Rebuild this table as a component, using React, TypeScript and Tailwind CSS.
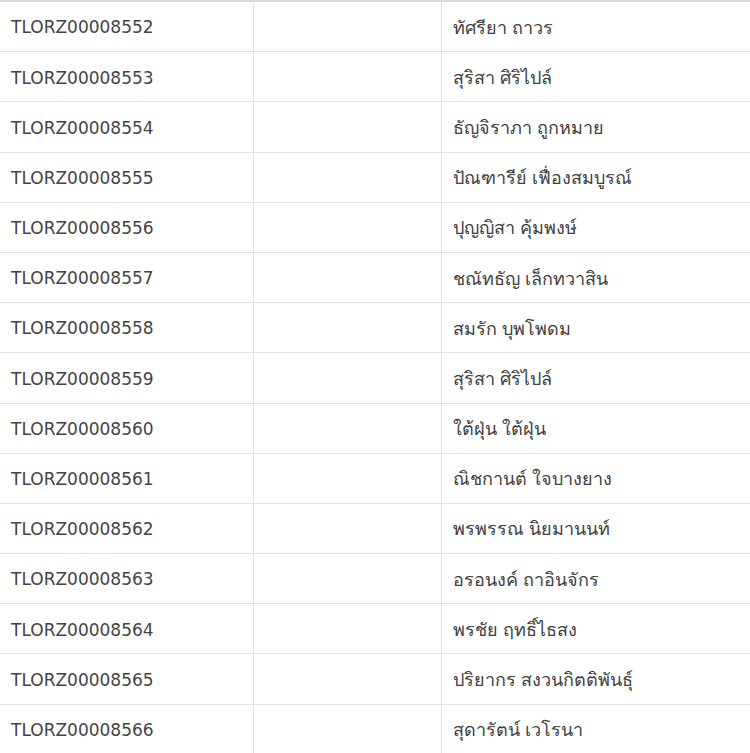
import React from "react";

const rows: [string, string][] = [
  ["TLORZ00008552", "ทัศรียา ถาวร"],
  ["TLORZ00008553", "สุริสา ศิริไปล์"],
  ["TLORZ00008554", "ธัญจิราภา ถูกหมาย"],
  ["TLORZ00008555", "ปัณฑารีย์ เฟื่องสมบูรณ์"],
  ["TLORZ00008556", "ปุญญิสา คุ้มพงษ์"],
  ["TLORZ00008557", "ชณัทธัญ เล็กทวาสิน"],
  ["TLORZ00008558", "สมรัก บุพโพดม"],
  ["TLORZ00008559", "สุริสา ศิริไปล์"],
  ["TLORZ00008560", "ใต้ฝุ่น ใต้ฝุ่น"],
  ["TLORZ00008561", "ณิชกานต์ ใจบางยาง"],
  ["TLORZ00008562", "พรพรรณ นิยมานนท์"],
  ["TLORZ00008563", "อรอนงค์ ถาอินจักร"],
  ["TLORZ00008564", "พรชัย ฤทธิ์ไธสง"],
  ["TLORZ00008565", "ปริยากร สงวนกิตติพันธุ์"],
  ["TLORZ00008566", "สุดารัตน์ เวโรนา"],
];

export default function App() {
  return (
    <div className="w-[750px] h-[753px] overflow-hidden bg-white">
      <div className="border-t-[2.3px] border-[#dcdcdc]">
        {rows.map(([id, name]) => (
          <div key={id} className="flex h-[50.2px] border-b border-[#e2e2e2]">
            <div
              className="w-[254px] flex items-center pl-[11px] pt-[3px] border-r border-[#e2e2e2] text-[17px] text-[#444444]"
              style={{ fontFamily: '"DejaVu Sans", "Noto Sans", sans-serif' }}
            >
              {id}
            </div>
            <div className="w-[188px] border-r border-[#e2e2e2]" />
            <div
              className="flex-1 flex items-center pl-[11px] pt-[1px] text-[18px] text-[#404040]"
              style={{ fontFamily: '"Noto Sans", sans-serif' }}
            >
              {name}
            </div>
          </div>
        ))}
      </div>
    </div>
  );
}
